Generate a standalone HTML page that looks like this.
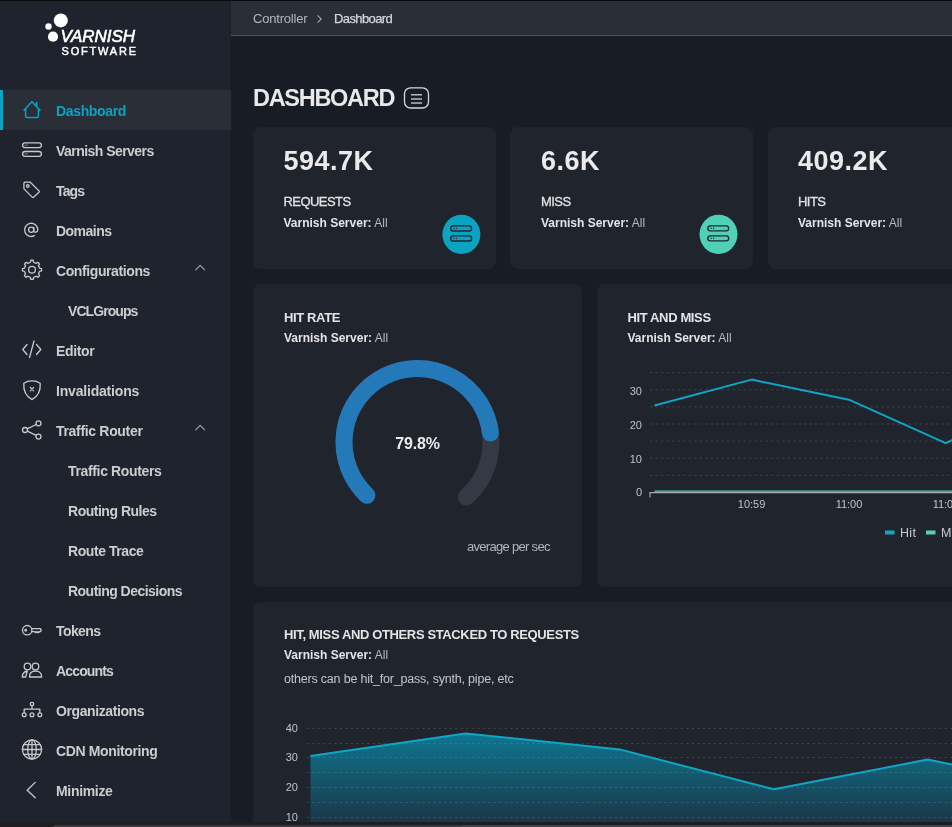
<!DOCTYPE html>
<html><head><meta charset="utf-8">
<style>
*{box-sizing:border-box;margin:0;padding:0}
html,body{width:952px;height:827px;overflow:hidden;background:#181c24;font-family:"Liberation Sans",sans-serif}
#top{position:absolute;left:0;top:0;width:952px;height:1px;background:#0a0a0c;z-index:5}
#side{position:absolute;left:0;top:0;width:231px;height:827px;background:#1f232d}
#side .shadow{position:absolute;left:230px;top:0;width:1px;height:827px;background:#1c2029}
.mi{position:absolute;left:0;width:231px;height:40px;line-height:40px;font-size:14px;font-weight:bold;color:#cdcdcf;letter-spacing:-0.35px;white-space:nowrap}
.mi span{position:absolute;left:56px;top:1px}
.mi.sub span{left:68px}
.mi.active{background:#2a2e37;color:#0aa3c2}
.mi.active:before{content:"";position:absolute;left:0;top:0;width:3px;height:40px;background:#0aa3c2}
svg.ic{position:absolute;left:0;top:0}
#hdr{position:absolute;left:231px;top:0;width:721px;height:36px;background:#2a2e37;border-bottom:1px solid #504e66}
.bc{position:absolute;top:1px;line-height:36px;font-size:13px;white-space:nowrap}
.title{position:absolute;left:253px;top:83px;font-size:23.5px;letter-spacing:-1.3px;font-weight:bold;color:#e8e8ea;line-height:30px;white-space:nowrap}
.card{position:absolute;background:#20242d;border-radius:8px}
.big{position:absolute;font-size:27px;letter-spacing:0.5px;font-weight:bold;color:#ebebed;white-space:nowrap;line-height:30px}
.lbl{position:absolute;font-size:13px;color:#e2e2e4;letter-spacing:-0.55px;-webkit-text-stroke:0.3px #e2e2e4;white-space:nowrap;line-height:16px}
.srv{position:absolute;font-size:12px;color:#d6d6d8;white-space:nowrap;line-height:14px;margin-top:1px}
.srv b{font-weight:bold;color:#e4e4e6}
.srv i{font-style:normal;color:#b9b9bd}
.ctitle{position:absolute;font-size:13px;font-weight:bold;color:#e4e4e6;letter-spacing:-0.37px;white-space:nowrap;line-height:16px}
#sb{position:absolute;left:0;top:822px;width:952px;height:5px;background:#1d1e20}
#sb div{position:absolute;left:54px;top:3px;width:407px;height:2px;background:#383642}
#sb div+div{left:461px;width:491px;background:#42404e}
</style></head><body>
<div id="wrap" style="position:absolute;left:0;top:0;width:952px;height:827px;will-change:transform;background:#171c25">
<div id="top"></div>
<div id="side">
  <div class="shadow"></div>
  <svg class="ic" width="60" height="180" style="top:0;left:0" viewBox="0 0 60 180">
    <!-- logo -->
  </svg>
  <div style="position:absolute;left:0;top:0;width:231px;height:80px">
    <svg width="231" height="80" style="position:absolute;left:0;top:0">
      <circle cx="60.8" cy="20.4" r="7" fill="#fff"/>
      <circle cx="48.5" cy="26.5" r="3.2" fill="#fff"/>
      <circle cx="53" cy="36.7" r="5.1" fill="#fff"/>
    </svg>
    <div style="position:absolute;left:60.5px;top:27px;font-size:17px;font-style:italic;color:#fff;line-height:20px;letter-spacing:0px;-webkit-text-stroke:0.6px #fff">VARNISH</div>
    <div style="position:absolute;left:61.5px;top:44.5px;font-size:11px;color:#fff;line-height:12px;letter-spacing:1.8px;-webkit-text-stroke:0.45px #fff">SOFTWARE</div>
  </div>

  <div class="mi active" style="top:90px"><span>Dashboard</span></div>
  <div class="mi" style="top:130px"><span style="letter-spacing:-0.54px">Varnish Servers</span></div>
  <div class="mi" style="top:170px"><span style="letter-spacing:-0.85px">Tags</span></div>
  <div class="mi" style="top:210px"><span style="letter-spacing:-0.52px">Domains</span></div>
  <div class="mi" style="top:250px"><span style="letter-spacing:-0.4px">Configurations</span></div>
  <div class="mi sub" style="top:290px"><span style="letter-spacing:-0.93px">VCLGroups</span></div>
  <div class="mi" style="top:330px"><span style="letter-spacing:-0.35px">Editor</span></div>
  <div class="mi" style="top:370px"><span style="letter-spacing:-0.19px">Invalidations</span></div>
  <div class="mi" style="top:410px"><span style="letter-spacing:-0.32px">Traffic Router</span></div>
  <div class="mi sub" style="top:450px"><span style="letter-spacing:-0.35px">Traffic Routers</span></div>
  <div class="mi sub" style="top:490px"><span style="letter-spacing:-0.48px">Routing Rules</span></div>
  <div class="mi sub" style="top:530px"><span style="letter-spacing:-0.43px">Route Trace</span></div>
  <div class="mi sub" style="top:570px"><span style="letter-spacing:-0.52px">Routing Decisions</span></div>
  <div class="mi" style="top:610px"><span style="letter-spacing:-0.59px">Tokens</span></div>
  <div class="mi" style="top:650px"><span style="letter-spacing:-0.85px">Accounts</span></div>
  <div class="mi" style="top:690px"><span style="letter-spacing:-0.4px">Organizations</span></div>
  <div class="mi" style="top:730px"><span style="letter-spacing:-0.37px">CDN Monitoring</span></div>
  <div class="mi" style="top:770px"><span style="letter-spacing:-0.32px">Minimize</span></div>

  <svg width="231" height="827" style="position:absolute;left:0;top:0" fill="none" stroke="#c9c9cc" stroke-width="1.3" stroke-linecap="round" stroke-linejoin="round">
    <!-- home -->
    <path d="M24 110.3 L32 101.8 L40 110.3 M25.6 108.6 V116.2 Q25.6 117.4 26.8 117.4 H37.2 Q38.4 117.4 38.4 116.2 V108.6" stroke="#0aa3c2" stroke-width="1.5"/>
    <rect x="35.6" y="102" width="1.9" height="4.2" fill="#0aa3c2" stroke="none"/>
    <!-- servers -->
    <rect x="22.6" y="142.8" width="18.8" height="4.8" rx="2.4"/>
    <rect x="22.6" y="151.5" width="18.8" height="4.8" rx="2.4"/>
    <path d="M25.2 145.2 h0.1 M27 145.2 h0.1 M25.2 153.9 h0.1 M27 153.9 h0.1" stroke-width="1"/>
    <!-- tag -->
    <path d="M23.9 183.4 Q23.9 182.2 25.1 182.2 H30.3 L39.2 191.1 Q39.6 191.5 39.2 191.9 L33.3 197.4 Q32.9 197.8 32.5 197.4 L24.2 189.1 Q23.9 188.8 23.9 188.4 Z"/>
    <circle cx="27.8" cy="186" r="1.3"/>
    <!-- @ -->
    <circle cx="31.2" cy="229.8" r="2.6"/>
    <path d="M33.8 227.5 V231 C33.8 232.8 37.8 232.8 37.8 229.8 A6.6 6.6 0 1 0 34.5 235.6"/>
    <!-- gear -->
    <circle cx="32" cy="269.8" r="3.4"/>
    <path d="M30.40 262.27 L30.83 260.27 L33.17 260.27 L33.60 262.27 L36.19 263.34 L37.91 262.24 L39.56 263.89 L38.46 265.61 L39.53 268.20 L41.53 268.63 L41.53 270.97 L39.53 271.40 L38.46 273.99 L39.56 275.71 L37.91 277.36 L36.19 276.26 L33.60 277.33 L33.17 279.33 L30.83 279.33 L30.40 277.33 L27.81 276.26 L26.09 277.36 L24.44 275.71 L25.54 273.99 L24.47 271.40 L22.47 270.97 L22.47 268.63 L24.47 268.20 L25.54 265.61 L24.44 263.89 L26.09 262.24 L27.81 263.34 Z"/>
    <!-- code -->
    <path d="M27 344.5 L22.8 349.5 L27 354.5 M36.5 344.5 L40.8 349.5 L36.5 354.5 M34 341 L29.5 357.5"/>
    <!-- shield -->
    <path d="M32 380.9 C34.5 380.9 38 381.8 40.2 383.2 C40.8 391 37.5 396.5 32 399.6 C26.5 396.5 23.2 391 23.8 383.2 C26 381.8 29.5 380.9 32 380.9 Z"/>
    <path d="M30.3 387.5 L33.6 390.8 M33.6 387.5 L30.3 390.8" stroke-width="1.2"/>
    <!-- share -->
    <circle cx="38.5" cy="423.3" r="2.5"/>
    <circle cx="25" cy="430" r="2.5"/>
    <circle cx="38.5" cy="436.6" r="2.5"/>
    <path d="M27.3 428.8 L36.2 424.5 M27.3 431.2 L36.2 435.4"/>
    <!-- key -->
    <circle cx="27.2" cy="630.2" r="4.7"/>
    <circle cx="25.7" cy="630.2" r="0.8" fill="#c9c9cc"/>
    <path d="M31.9 628.7 H40.4 Q41.9 630.2 40.4 631.7 L39.5 631.7 L38.7 632.5 L37.9 631.7 L37.1 632.5 L36.3 631.7 L35.5 632.5 L34.7 631.7 H31.9"/>
    <!-- accounts -->
    <circle cx="27.5" cy="666.5" r="3.3"/>
    <circle cx="35.5" cy="666.5" r="3.3"/>
    <path d="M22.3 677 C22.3 673.8 24 671.6 27.3 671 L25.6 677 Z"/>
    <path d="M29.5 677 C29.5 673.2 32 671 35.5 671 C39 671 41.7 673.2 41.7 677 Z"/>
    <!-- orgs -->
    <circle cx="32" cy="704" r="1.7"/>
    <path d="M32 705.8 V709.2 M24.2 712.8 V709.2 H39.8 V712.8"/>
    <circle cx="24.2" cy="714.7" r="1.9"/>
    <circle cx="32" cy="714.7" r="1.9"/>
    <circle cx="39.8" cy="714.7" r="1.9"/>
    <!-- globe -->
    <circle cx="32" cy="749.5" r="9.6"/>
    <ellipse cx="32" cy="749.5" rx="4.3" ry="9.6"/>
    <path d="M32 739.9 V759.1 M22.4 749.5 H41.6 M23.6 744.6 H40.4 M23.6 754.4 H40.4"/>
    <!-- minimize -->
    <path d="M35.2 782.4 L27.2 790.2 L35.2 797.8"/>
    <!-- chevrons -->
    <path d="M195.8 269.8 L200.2 265.5 L204.6 269.8" stroke="#8f9197" stroke-width="1.25"/>
    <path d="M195.8 429.8 L200.2 425.5 L204.6 429.8" stroke="#8f9197" stroke-width="1.25"/>
  </svg>
</div>

<div id="hdr"></div>
<div class="bc" style="left:253px;color:#b5b6ba;letter-spacing:-0.2px">Controller</div>
<svg width="10" height="14" style="position:absolute;left:315px;top:12px" fill="none" stroke="#a4a5aa" stroke-width="1.1"><path d="M2.6 3.4 L6.2 7 L2.6 10.6"/></svg>
<div class="bc" style="left:334px;color:#d6d7da;letter-spacing:-0.6px;-webkit-text-stroke:0.25px #d6d7da">Dashboard</div>

<div class="title">DASHBOARD</div>
<svg width="28" height="24" style="position:absolute;left:402px;top:86px" fill="none" stroke="#d8d8da">
  <rect x="2.5" y="1.8" width="24" height="20.2" rx="6" stroke-width="1.3"/>
  <path d="M9 8.8 H20 M9 12.9 H20 M9 17.1 H20" stroke-width="1.5" stroke="#b8b9bd"/>
</svg>

<!-- stat cards -->
<div class="card" style="left:253px;top:127px;width:242.5px;height:142px"></div>
<div class="card" style="left:510.2px;top:127px;width:242.5px;height:142px"></div>
<div class="card" style="left:767.5px;top:127px;width:243px;height:142px"></div>

<div class="big" style="left:283.5px;top:146px">594.7K</div>
<div class="lbl" style="left:283.5px;top:194px">REQUESTS</div>
<div class="srv" style="left:283.5px;top:215px"><b>Varnish Server:</b><i> All</i></div>

<div class="big" style="left:541px;top:146px">6.6K</div>
<div class="lbl" style="left:541px;top:194px">MISS</div>
<div class="srv" style="left:541px;top:215px"><b>Varnish Server:</b><i> All</i></div>

<div class="big" style="left:798px;top:146px">409.2K</div>
<div class="lbl" style="left:798px;top:194px">HITS</div>
<div class="srv" style="left:798px;top:215px"><b>Varnish Server:</b><i> All</i></div>

<svg width="952" height="827" style="position:absolute;left:0;top:0">
  <ellipse cx="461.4" cy="234.4" rx="19" ry="19.6" fill="#0aa3c2"/>
  <ellipse cx="718.5" cy="234.3" rx="19" ry="19.6" fill="#4fd1b8"/>
  <g fill="none" stroke="#1f2630" stroke-width="1.35">
    <rect x="450.7" y="225.9" width="20.9" height="5.1" rx="2.55"/>
    <rect x="450.7" y="235.9" width="20.9" height="5.1" rx="2.55"/>
    <rect x="707.8" y="225.8" width="20.9" height="5.1" rx="2.55"/>
    <rect x="707.8" y="235.8" width="20.9" height="5.1" rx="2.55"/>
  </g>
  <g fill="#1f2630">
    <circle cx="454" cy="228.4" r="0.7"/><circle cx="456.5" cy="228.4" r="0.7"/>
    <circle cx="454" cy="238.4" r="0.7"/><circle cx="456.5" cy="238.4" r="0.7"/>
    <circle cx="711.1" cy="228.3" r="0.7"/><circle cx="713.6" cy="228.3" r="0.7"/>
    <circle cx="711.1" cy="238.3" r="0.7"/><circle cx="713.6" cy="238.3" r="0.7"/>
  </g>
</svg>

<!-- hit rate -->
<div class="card" style="left:253px;top:284px;width:329px;height:303px"></div>
<div class="ctitle" style="left:284px;top:310px">HIT RATE</div>
<div class="srv" style="left:284px;top:330px"><b>Varnish Server:</b><i> All</i></div>
<svg width="329" height="303" style="position:absolute;left:253px;top:284px" fill="none">
  <path d="M113.9 211.3 A73.5 73.5 0 1 1 213.2 213.05" stroke="#353943" stroke-width="17" stroke-linecap="round"/>
  <path d="M113.9 211.3 A73.5 73.5 0 1 1 237.44 148.98" stroke="#2479b8" stroke-width="17" stroke-linecap="round"/>
</svg>
<div style="position:absolute;left:367.5px;top:434px;width:100px;text-align:center;font-size:16px;letter-spacing:-0.2px;font-weight:bold;color:#ececee;line-height:20px">79.8%</div>
<div style="position:absolute;left:467px;top:539px;font-size:13px;color:#b4b5b9;line-height:16px;letter-spacing:-0.7px;white-space:nowrap">average per sec</div>

<!-- hit and miss -->
<div class="card" style="left:596.5px;top:284px;width:400px;height:303px"></div>
<div class="ctitle" style="left:627.5px;top:310px">HIT AND MISS</div>
<div class="srv" style="left:627.5px;top:330px"><b>Varnish Server:</b><i> All</i></div>

<!-- stacked -->
<div class="card" style="left:253px;top:602px;width:750px;height:300px"></div>
<div class="ctitle" style="left:284px;top:627px">HIT, MISS AND OTHERS STACKED TO REQUESTS</div>
<div class="srv" style="left:284px;top:647px"><b>Varnish Server:</b><i> All</i></div>
<div style="position:absolute;left:284px;top:671.5px;font-size:12.5px;color:#c4c5c9;line-height:14px;white-space:nowrap;letter-spacing:-0.2px">others can be hit_for_pass, synth, pipe, etc</div>


<svg width="952" height="827" style="position:absolute;left:0;top:0" fill="none">
  <defs>
    <clipPath id="c1"><rect x="596.5" y="284" width="400" height="303"/></clipPath>
    <linearGradient id="g2" x1="0" y1="0" x2="0" y2="1">
      <stop offset="0" stop-color="#0e7690"/>
      <stop offset="1" stop-color="#1b3443"/>
    </linearGradient>
  </defs>
  <g stroke="#3e424c" stroke-width="1" stroke-dasharray="2.6 2.9">
    <path d="M650 372.7 H952 M650 389.8 H952 M650 406.9 H952 M650 424 H952 M650 441.1 H952 M650 458.2 H952 M650 475.3 H952"/>
  </g>
  <path d="M650 497.5 V492.6 H952" stroke="#a9aaae" stroke-width="1.1"/>
  <path d="M654.5 491.1 H952" stroke="#50d0b8" stroke-width="1.4"/>
  <path d="M654.5 405.5 L751.6 379.6 L848.9 399.7 L945.7 443.2 L1042.8 394" stroke="#0ea6c6" stroke-width="2" stroke-linejoin="round"/>
  <g fill="#c2c3c7" font-family="Liberation Sans" font-size="11" text-anchor="end">
    <text x="642" y="394.5">30</text>
    <text x="642" y="429">20</text>
    <text x="642" y="463">10</text>
    <text x="642" y="496">0</text>
  </g>
  <g fill="#c2c3c7" font-family="Liberation Sans" font-size="11" text-anchor="middle">
    <text x="751.6" y="508">10:59</text>
    <text x="849" y="508">11:00</text>
    <text x="946" y="508">11:01</text>
  </g>
  <rect x="885" y="530.5" width="9.5" height="4" fill="#0ea6c6"/>
  <text x="900" y="537.3" fill="#c8c9cd" font-family="Liberation Sans" font-size="12.5" letter-spacing="0.3">Hit</text>
  <rect x="926" y="530.5" width="9.5" height="4" fill="#50d0b8"/>
  <text x="941" y="537.3" fill="#c8c9cd" font-family="Liberation Sans" font-size="12.5" letter-spacing="0.3">Miss</text>
</svg>

<svg width="952" height="827" style="position:absolute;left:0;top:0" fill="none">
  <path d="M310.4 756.1 L465.5 733.4 L619.7 749.4 L774 789.3 L927.5 759.6 L1081 790 V827 H310.4 Z" fill="url(#g2)"/>
  <g stroke="#a8b4c0" stroke-opacity="0.19" stroke-width="1" stroke-dasharray="2.6 2.9">
    <path d="M306.6 728.5 H952 M306.6 743.5 H952 M306.6 757.5 H952 M306.6 772.5 H952 M306.6 787.5 H952 M306.6 802.5 H952 M306.6 817.5 H952"/>
  </g>
  <path d="M310.4 756.1 L465.5 733.4 L619.7 749.4 L774 789.3 L927.5 759.6 L1081 790" stroke="#0ea6c6" stroke-width="2" stroke-linejoin="round"/>
  <g fill="#c2c3c7" font-family="Liberation Sans" font-size="11" text-anchor="end">
    <text x="298" y="731.7">40</text>
    <text x="298" y="761.2">30</text>
    <text x="298" y="790.7">20</text>
    <text x="298" y="820.7">10</text>
  </g>
</svg>
<div id="sb"><div></div><div></div></div>
</div>
</body></html>
